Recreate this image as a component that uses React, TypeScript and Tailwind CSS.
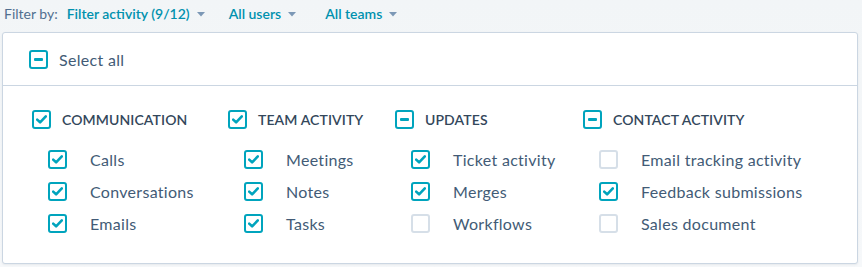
import React from "react";

type State = "checked" | "partial" | "empty";

interface Group {
  title: string;
  state: State;
  width: string;
  items: { label: string; state: State }[];
}

const groups: Group[] = [
  {
    title: "Communication",
    state: "checked",
    width: "w-[196px]",
    items: [
      { label: "Calls", state: "checked" },
      { label: "Conversations", state: "checked" },
      { label: "Emails", state: "checked" },
    ],
  },
  {
    title: "Team activity",
    state: "checked",
    width: "w-[167px]",
    items: [
      { label: "Meetings", state: "checked" },
      { label: "Notes", state: "checked" },
      { label: "Tasks", state: "checked" },
    ],
  },
  {
    title: "Updates",
    state: "partial",
    width: "w-[188px]",
    items: [
      { label: "Ticket activity", state: "checked" },
      { label: "Merges", state: "checked" },
      { label: "Workflows", state: "empty" },
    ],
  },
  {
    title: "Contact activity",
    state: "partial",
    width: "w-[240px]",
    items: [
      { label: "Email tracking activity", state: "empty" },
      { label: "Feedback submissions", state: "checked" },
      { label: "Sales document", state: "empty" },
    ],
  },
];

const Checkbox: React.FC<{ state: State }> = ({ state }) => {
  if (state === "empty") {
    return (
      <span className="w-[19px] h-[19px] shrink-0 rounded-[3px] border-2 border-[#d6dfe8] bg-white" />
    );
  }
  return (
    <span className="w-[19px] h-[19px] shrink-0 rounded-[3px] border-2 border-[#00a4bd] bg-white flex items-center justify-center">
      {state === "checked" ? (
        <svg width="11" height="9" viewBox="0 0 11 9">
          <path
            d="M1.2 4.6 L4.1 7.3 L9.8 1.4"
            fill="none"
            stroke="#00a4bd"
            strokeWidth="2.6"
            strokeLinecap="round"
            strokeLinejoin="round"
          />
        </svg>
      ) : (
        <span className="w-[9px] h-[3px] bg-[#00a4bd] rounded-[1px]" />
      )}
    </span>
  );
};

const Caret = () => (
  <svg width="8" height="5" viewBox="0 0 8 5" className="ml-[7px] mt-[2px]">
    <path d="M0 0 H8 L4 4.5 Z" fill="#7c98b6" />
  </svg>
);

const App: React.FC = () => {
  return (
    <div
      className="w-[862px] h-[267px] bg-gradient-to-b from-[#f2f5f7] to-[#f6f8fa] text-[#33475b] overflow-hidden"
      style={{ fontFamily: "Lato, 'Open Sans', sans-serif" }}
    >
      <div className="flex items-center h-[30px] pl-[4px] pb-[4px] text-[14px]">
        <span className="text-[#516f90]">Filter by:</span>
        <span className="ml-[9px] flex items-center font-semibold text-[#0091ae]">
          Filter activity (9/12)
          <Caret />
        </span>
        <span className="ml-[24px] flex items-center font-semibold text-[#0091ae]">
          All users
          <Caret />
        </span>
        <span className="ml-[29px] flex items-center font-semibold text-[#0091ae]">
          All teams
          <Caret />
        </span>
      </div>

      <div className="mt-[2px] ml-[2px] w-[856px] h-[232px] bg-white border border-[#cbd6e2] rounded-[3px] shadow-[0_1px_2px_rgba(45,62,80,0.08)]">
        <div className="h-[53px] border-b border-[#cbd6e2] flex items-center pl-[26px] pt-[1px]">
          <Checkbox state="partial" />
          <span className="ml-[11px] text-[16px] tracking-[0.3px] text-[#425b76]">Select all</span>
        </div>

        <div className="flex pl-[29px] pt-[23px]">
          {groups.map((g) => (
            <div key={g.title} className={`${g.width} shrink-0`}>
              <div className="flex items-center">
                <Checkbox state={g.state} />
                <span className="ml-[11px] text-[14px] font-semibold uppercase tracking-[0.1px]">
                  {g.title}
                </span>
              </div>
              <div className="flex flex-col gap-[13px] pl-[16px] pt-[20px]">
                {g.items.map((it) => (
                  <div key={it.label} className="flex items-center h-[19px]">
                    <Checkbox state={it.state} />
                    <span className="ml-[23px] text-[16px] tracking-[0.3px] text-[#425b76]">
                      {it.label}
                    </span>
                  </div>
                ))}
              </div>
            </div>
          ))}
        </div>
      </div>
    </div>
  );
};

export default App;
